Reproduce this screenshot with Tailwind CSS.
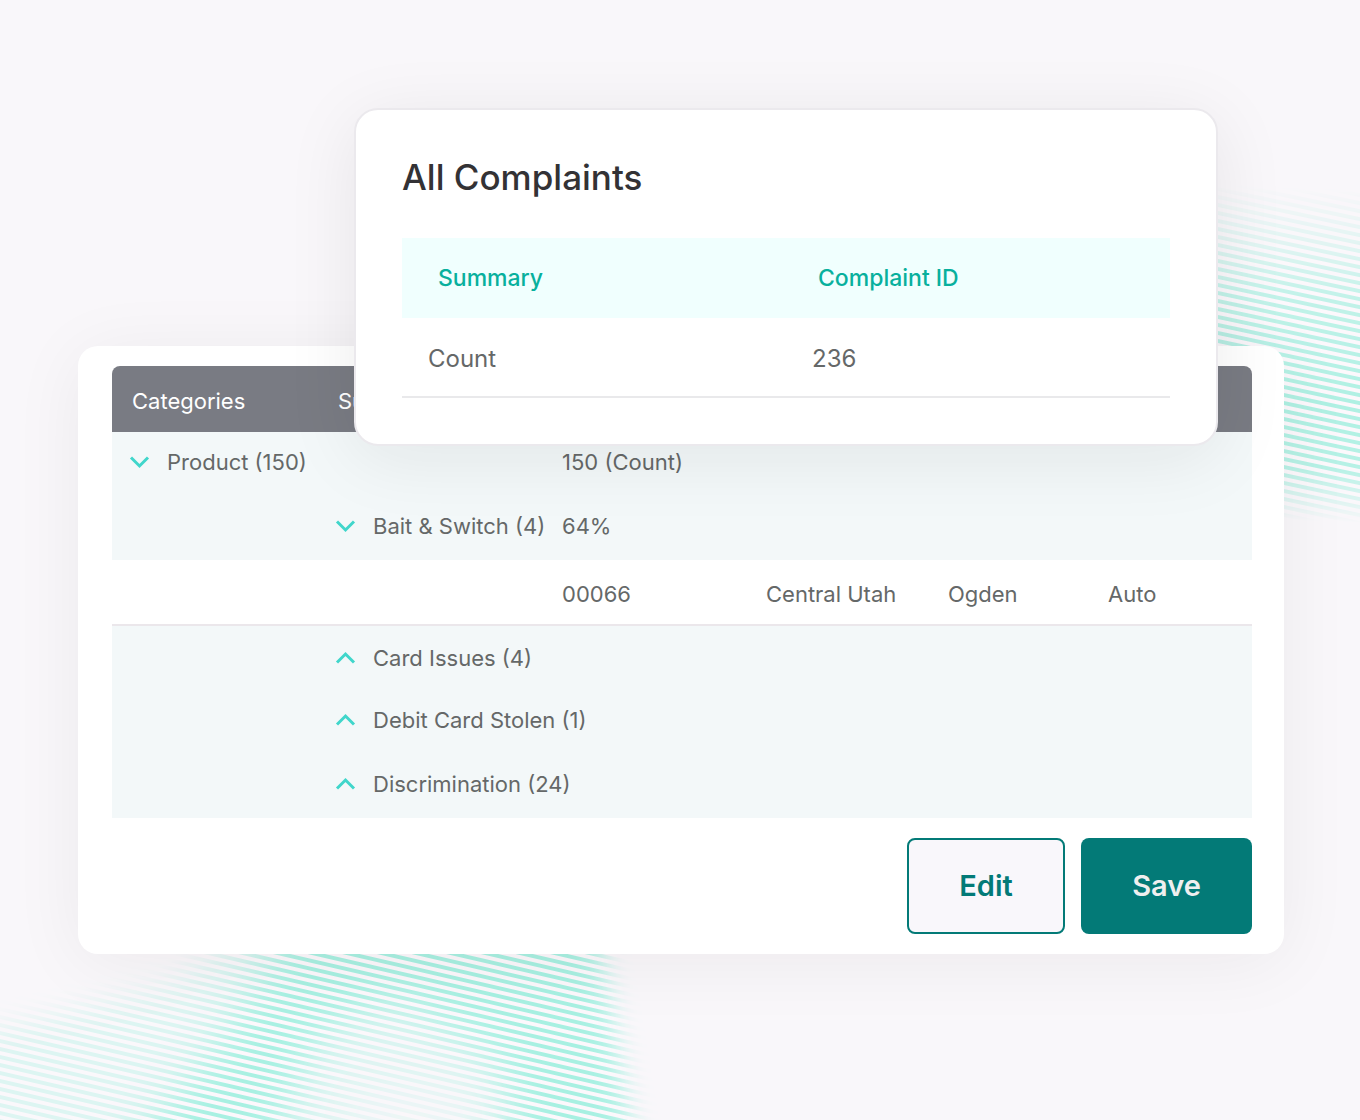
<!DOCTYPE html>
<html lang="en">
<head>
  <meta charset="UTF-8" />
  <meta name="viewport" content="width=device-width, initial-scale=1.0"/>
  <title>All Complaints</title>
  <script src="https://cdn.jsdelivr.net/npm/@tailwindcss/browser@4"></script>
</head>
<body class="relative min-h-screen overflow-x-hidden bg-[#f9f7fa] font-['Inter','Liberation_Sans',sans-serif] text-[#656868]">

  <!-- Wave lines, right -->
  <svg class="absolute right-0 top-[170px]" width="200" height="380" viewBox="1160 170 200 380" fill="none" aria-hidden="true">
    <defs>
      <linearGradient id="fade-right" gradientUnits="userSpaceOnUse" x1="1290" y1="180" x2="1278" y2="520">
        <stop offset="0.02" stop-color="#fff" stop-opacity="0"/>
        <stop offset="0.2" stop-color="#fff" stop-opacity="0.35"/>
        <stop offset="0.34" stop-color="#fff" stop-opacity="0.75"/>
        <stop offset="0.65" stop-color="#fff" stop-opacity="1"/>
        <stop offset="0.84" stop-color="#fff" stop-opacity="0.9"/>
        <stop offset="1" stop-color="#fff" stop-opacity="0"/>
      </linearGradient>
      <mask id="mask-right" maskUnits="userSpaceOnUse" x="1160" y="170" width="200" height="380">
        <rect x="1160" y="170" width="200" height="380" fill="url(#fade-right)"/>
      </mask>
      <pattern id="lines-right" width="40" height="8" patternUnits="userSpaceOnUse" patternTransform="translate(1218 257) skewY(12)">
        <rect width="40" height="8" fill="#fcf8fc"/>
        <rect y="2" width="40" height="4" fill="#aff0e3"/>
      </pattern>
    </defs>
    <g mask="url(#mask-right)"><rect x="1160" y="170" width="200" height="380" fill="url(#lines-right)"/></g>
  </svg>

  <!-- Wave lines, bottom left -->
  <svg class="absolute bottom-0 left-0" width="700" height="190" viewBox="0 930 700 190" fill="none" aria-hidden="true">
    <defs>
      <filter id="soft" filterUnits="userSpaceOnUse" x="-150" y="800" width="1000" height="450"><feGaussianBlur stdDeviation="22"/></filter>
      <filter id="soft-edge" filterUnits="userSpaceOnUse" x="-150" y="800" width="1000" height="450"><feGaussianBlur stdDeviation="14"/></filter>
      <mask id="mask-left" maskUnits="userSpaceOnUse" x="0" y="930" width="700" height="190">
        <path d="M-100 1050 L40 1020 L170 985 L290 900 L590 900 L640 1180 L-100 1180Z" fill="#fff" fill-opacity="0.35" filter="url(#soft-edge)"/>
        <path d="M300 900 L600 900 L620 1000 L645 1200 L520 1200 L500 1060 L400 1000 L320 1030 L250 1200 L90 1200 L220 1040Z" fill="#fff" filter="url(#soft)"/>
        <path d="M598 900 L720 900 L720 1200 L650 1200Z" fill="#000" filter="url(#soft-edge)"/>
        <ellipse cx="410" cy="1115" rx="75" ry="35" fill="#000" fill-opacity="0.6" filter="url(#soft)"/>
      </mask>
      <pattern id="lines-left" width="40" height="8" patternUnits="userSpaceOnUse" patternTransform="translate(0 957) skewY(13)">
        <rect width="40" height="8" fill="#fcf8fc"/>
        <rect y="2" width="40" height="4" fill="#a8f0e2"/>
      </pattern>
    </defs>
    <g mask="url(#mask-left)"><rect y="930" width="700" height="190" fill="url(#lines-left)"/></g>
  </svg>

  <!-- Category table -->
  <main class="relative pb-[166px] pl-[78px] pr-[76px] pt-[346px]">
    <section class="rounded-[20px] bg-white py-5 pl-[34px] pr-8 shadow-[0_8px_72px_rgba(30,20,25,0.06)]">
      <table class="w-full table-fixed border-separate border-spacing-0 text-left text-[22px] leading-7">
        <colgroup>
          <col class="w-[206px]"><col class="w-[224px]"><col class="w-[204px]"><col class="w-[182px]"><col class="w-[160px]"><col>
        </colgroup>
        <thead class="text-white">
          <tr class="h-[66px]">
            <th scope="col" class="rounded-tl-lg bg-[#797b83] px-5 pt-1 font-normal">Categories</th>
            <th scope="col" class="bg-[#797b83] px-5 pt-1 font-normal">Subcategories</th>
            <td class="bg-[#797b83]"></td>
            <td class="bg-[#797b83]"></td>
            <td class="bg-[#797b83]"></td>
            <td class="rounded-tr-lg bg-[#797b83]"></td>
          </tr>
        </thead>
        <tbody class="whitespace-nowrap">
          <tr class="h-16 bg-[#f3f8f9]">
            <td class="px-4 pb-1">
              <div class="flex items-center gap-[15px]">
                <svg class="h-4 w-6 shrink-0" viewBox="0 0 24 16" fill="none" stroke="#40d6cb" stroke-width="3"><path d="M3 3.500l8.500 8.500 8.500-8.500"/></svg>
                Product (150)
              </div>
            </td>
            <td></td>
            <td class="px-5 pb-1">150 (Count)</td>
            <td></td><td></td><td></td>
          </tr>
          <tr class="h-16 bg-[#f3f8f9]">
            <td></td>
            <td class="px-4 pb-1">
              <div class="flex items-center gap-[15px]">
                <svg class="h-4 w-6 shrink-0" viewBox="0 0 24 16" fill="none" stroke="#40d6cb" stroke-width="3"><path d="M3 3.500l8.500 8.500 8.500-8.500"/></svg>
                Bait &amp; Switch (4)
              </div>
            </td>
            <td class="px-5 pb-1">64%</td>
            <td></td><td></td><td></td>
          </tr>
          <tr class="h-[66px]">
            <td class="border-b-2 border-[#ebe7eb]"></td>
            <td class="border-b-2 border-[#ebe7eb]"></td>
            <td class="border-b-2 border-[#ebe7eb] px-5 pt-1">00066</td>
            <td class="border-b-2 border-[#ebe7eb] px-5 pt-1">Central Utah</td>
            <td class="border-b-2 border-[#ebe7eb] px-5 pt-1">Ogden</td>
            <td class="border-b-2 border-[#ebe7eb] px-5 pt-1">Auto</td>
          </tr>
          <tr class="h-16 bg-[#f3f8f9]">
            <td></td>
            <td class="px-4" colspan="5">
              <div class="flex items-center gap-[15px]">
                <svg class="h-4 w-6 shrink-0" viewBox="0 0 24 16" fill="none" stroke="#40d6cb" stroke-width="3"><path d="M3 12.500l8.500-8.500 8.500 8.500"/></svg>
                Card Issues (4)
              </div>
            </td>
          </tr>
          <tr class="h-16 bg-[#f3f8f9]">
            <td></td>
            <td class="px-4 pb-1" colspan="5">
              <div class="flex items-center gap-[15px]">
                <svg class="h-4 w-6 shrink-0" viewBox="0 0 24 16" fill="none" stroke="#40d6cb" stroke-width="3"><path d="M3 12.500l8.500-8.500 8.500 8.500"/></svg>
                Debit Card Stolen (1)
              </div>
            </td>
          </tr>
          <tr class="h-16 bg-[#f3f8f9]">
            <td></td>
            <td class="px-4 pb-1" colspan="5">
              <div class="flex items-center gap-[15px]">
                <svg class="h-4 w-6 shrink-0" viewBox="0 0 24 16" fill="none" stroke="#40d6cb" stroke-width="3"><path d="M3 12.500l8.500-8.500 8.500 8.500"/></svg>
                Discrimination (24)
              </div>
            </td>
          </tr>
        </tbody>
      </table>

      <div class="mt-5 flex justify-end gap-4">
        <button type="button" class="h-24 w-[158px] rounded-lg border-2 border-[#037a77] bg-[#f9f7fb] text-[29px] font-semibold text-[#037a77]">Edit</button>
        <button type="button" class="h-24 w-[171px] rounded-lg bg-[#037a77] text-[29px] font-semibold text-[#efefef]">Save</button>
      </div>
    </section>

    <!-- Summary card floating above the table -->
    <section class="absolute left-[354px] right-[142px] top-[108px] rounded-3xl border-2 border-[#ebe9ed] bg-white p-[46px] shadow-[0_12px_72px_rgba(30,20,25,0.08)]">
      <h1 class="mb-10 text-[35px] leading-[42px] font-medium text-[#333235]">All Complaints</h1>
      <table class="w-full table-fixed border-separate border-spacing-0 text-left text-2xl">
        <thead class="text-[23px] text-[#08b09d]">
          <tr class="h-20 bg-[#f0fffe]">
            <th scope="col" class="pl-9 font-medium">Summary</th>
            <th scope="col" class="pl-8 font-medium">Complaint ID</th>
          </tr>
        </thead>
        <tbody>
          <tr class="h-20">
            <td class="border-b-2 border-[#e9e9eb] pl-[26px] pt-1">Count</td>
            <td class="border-b-2 border-[#e9e9eb] pl-[26px] pt-1">236</td>
          </tr>
        </tbody>
      </table>
    </section>
  </main>

</body>
</html>
